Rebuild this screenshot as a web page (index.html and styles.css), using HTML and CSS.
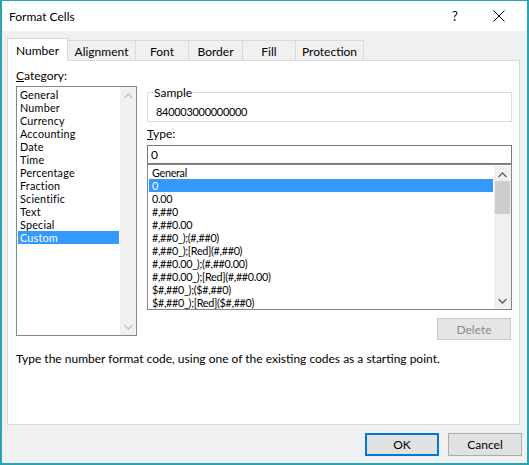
FILE: index.html
```html
<!DOCTYPE html>
<html>
<head>
<meta charset="utf-8">
<link rel="stylesheet" href="styles.css">
</head>
<body>
<div class="window">
  <div class="titlebar">
    <span class="title">Format Cells</span>
    <span class="help">?</span>
    <span class="close"><svg width="12" height="12" viewBox="0 0 12 12"><path d="M0.5 0.5 L11.5 11.5 M11.5 0.5 L0.5 11.5" stroke="#000" stroke-width="1" fill="none"/></svg></span>
  </div>
  <div class="tabs">
    <div class="tab selected t-number">Number</div>
    <div class="tab t-align">Alignment</div>
    <div class="tab t-font">Font</div>
    <div class="tab t-border">Border</div>
    <div class="tab t-fill">Fill</div>
    <div class="tab t-prot">Protection</div>
  </div>
  <div class="panel">
    <div class="cols">
      <div class="leftcol">
        <div class="label"><u>C</u>ategory:</div>
        <div class="catlist">
          <div class="items">
            <div class="item">General</div>
            <div class="item">Number</div>
            <div class="item">Currency</div>
            <div class="item">Accounting</div>
            <div class="item">Date</div>
            <div class="item">Time</div>
            <div class="item">Percentage</div>
            <div class="item">Fraction</div>
            <div class="item">Scientific</div>
            <div class="item">Text</div>
            <div class="item">Special</div>
            <div class="item sel">Custom</div>
          </div>
          <div class="scroll disabled">
            <div class="arrow"><svg width="9" height="6" viewBox="0 0 9 6"><path d="M0.5 5 L4.5 1 L8.5 5" stroke="#c4c4c4" stroke-width="1.3" fill="none"/></svg></div>
            <div class="track"></div>
            <div class="arrow"><svg width="9" height="6" viewBox="0 0 9 6"><path d="M0.5 1 L4.5 5 L8.5 1" stroke="#c4c4c4" stroke-width="1.3" fill="none"/></svg></div>
          </div>
        </div>
      </div>
      <div class="rightcol">
        <fieldset class="sample">
          <legend>Sample</legend>
          <div class="sample-value">840003000000000</div>
        </fieldset>
        <div class="label type-label"><u>T</u>ype:</div>
        <div class="typebox">0</div>
        <div class="fmtlist">
          <div class="items">
            <div class="item">General</div>
            <div class="item sel">0</div>
            <div class="item">0.00</div>
            <div class="item">#,##0</div>
            <div class="item">#,##0.00</div>
            <div class="item">#,##0_);(#,##0)</div>
            <div class="item">#,##0_);[Red](#,##0)</div>
            <div class="item">#,##0.00_);(#,##0.00)</div>
            <div class="item">#,##0.00_);[Red](#,##0.00)</div>
            <div class="item">$#,##0_);($#,##0)</div>
            <div class="item">$#,##0_);[Red]($#,##0)</div>
          </div>
          <div class="scroll">
            <div class="arrow"><svg width="9" height="6" viewBox="0 0 9 6"><path d="M0.5 5 L4.5 1 L8.5 5" stroke="#606060" stroke-width="1.3" fill="none"/></svg></div>
            <div class="track"><div class="thumb"></div></div>
            <div class="arrow"><svg width="9" height="6" viewBox="0 0 9 6"><path d="M0.5 1 L4.5 5 L8.5 1" stroke="#606060" stroke-width="1.3" fill="none"/></svg></div>
          </div>
        </div>
        <div class="delete-row"><div class="btn disabled-btn">Delete</div></div>
      </div>
    </div>
    <div class="desc">Type the number format code, using one of the existing codes as a starting point.</div>
  </div>
  <div class="buttons">
    <div class="btn default-btn">OK</div>
    <div class="btn">Cancel</div>
  </div>
</div>
</body>
</html>
```
FILE: styles.css
```css
html, body {
  margin: 0;
  padding: 0;
  background: #fff;
}
body {
  font-family: Lato, "Noto Sans", sans-serif;
  font-size: 12px;
  color: #000;
}
.window {
  width: 529px;
  height: 465px;
  box-sizing: border-box;
  border: 2px solid #2ba4ad;
  border-top-width: 1px;
  background: #f0f0f0;
  display: flex;
  flex-direction: column;
}
.titlebar {
  height: 30px;
  background: #fff;
  display: flex;
  align-items: center;
  padding-left: 7px;
  flex-shrink: 0;
}
.title {
  font-size: 12px;
  flex: 1;
}
.help {
  font-size: 13px;
  width: 41px;
}
.close {
  width: 34px;
  display: flex;
  align-items: center;
  height: 12px;
}
.tabs {
  display: flex;
  align-items: flex-end;
  margin: 7px 0 0 5px;
  height: 22px;
}
.tab {
  box-sizing: border-box;
  height: 20px;
  border: 1px solid #d9d9d9;
  border-bottom: none;
  margin-left: -1px;
  display: flex;
  align-items: center;
  justify-content: center;
  line-height: 15px;
  padding-top: 1px;
}
.tab.selected {
  height: 23px;
  background: #fff;
  margin-left: 0;
  margin-bottom: -1px;
  position: relative;
  z-index: 1;
  padding-top: 0;
}
.t-number { width: 61px; }
.t-align { width: 69px; }
.t-font { width: 54px; }
.t-border { width: 55px; }
.t-fill { width: 54px; }
.t-prot { width: 69px; }
.panel {
  margin-left: 5px;
  width: 513px;
  height: 365px;
  box-sizing: border-box;
  border: 1px solid #d9d9d9;
  background: #fff;
  padding: 7px 0 0 8px;
}
.cols {
  display: grid;
  grid-template-columns: 121px 365px;
  column-gap: 10px;
}
.label {
  line-height: 15px;
  height: 15px;
}
.catlist {
  margin-top: 3px;
  height: 250px;
  box-sizing: border-box;
  border: 1px solid #828790;
  display: flex;
  padding: 1px 0 0 1px;
}
.items {
  flex: 1;
  display: flex;
  flex-direction: column;
}
.item {
  height: 13px;
  line-height: 13px;
  font-size: 10.8px;
  padding-left: 3px;
  white-space: nowrap;
}
.catlist .item { padding-left: 2px; margin-right: 1px; letter-spacing: 0.2px; }
.item.sel {
  background: #3399ff;
  color: #fff;
}
.scroll {
  width: 16px;
  background: #f0f0f0;
  display: flex;
  flex-direction: column;
  margin-top: -1px;
}
.arrow {
  height: 17px;
  display: flex;
  align-items: center;
  justify-content: center;
}
.track {
  flex: 1;
  padding: 0 1px;
}
.thumb {
  height: 33px;
  background: #cdcdcd;
  margin-top: -2px;
}
.rightcol {
  display: flex;
  flex-direction: column;
  padding-top: 17px;
}
.sample {
  margin: 0;
  border: 1px solid #dcdcdc;
  padding: 4px 8px 1px 8px;
  height: 37px;
  box-sizing: border-box;
}
.sample legend {
  padding: 0 1px;
  margin-left: -3px;
  line-height: 15px;
}
.sample-value {
  line-height: 15px;
  font-size: 11px;
  letter-spacing: -0.3px;
}
.type-label {
  margin-top: 4px;
}
.typebox {
  margin-top: 4px;
  height: 19px;
  box-sizing: border-box;
  border: 1px solid #7a7a7a;
  padding-left: 3px;
  line-height: 17px;
}
.fmtlist {
  height: 146px;
  box-sizing: border-box;
  border: 1px solid #828790;
  display: flex;
  padding: 1px 0 0 1px;
}
.fmtlist .scroll { margin-top: 0; margin-right: 0; width: 17px; }
.fmtlist .item { margin-right: 1px; letter-spacing: -0.3px; }
.delete-row {
  display: flex;
  justify-content: flex-end;
  margin-top: 8px;
  padding-right: 1px;
}
.btn {
  width: 74px;
  height: 23px;
  box-sizing: border-box;
  border: 1px solid #adadad;
  background: #e1e1e1;
  display: flex;
  align-items: center;
  justify-content: center;
}
.disabled-btn {
  background: #e5e5e5;
  border-color: #c8c8c8;
  color: #8a8a8a;
  height: 22px;
}
.default-btn {
  border: 2px solid #0078d7;
}
.desc {
  margin-top: 11px;
  line-height: 15px;
}
.buttons {
  display: flex;
  justify-content: flex-end;
  gap: 9px;
  margin-top: 8px;
  padding-right: 5px;
}
```
